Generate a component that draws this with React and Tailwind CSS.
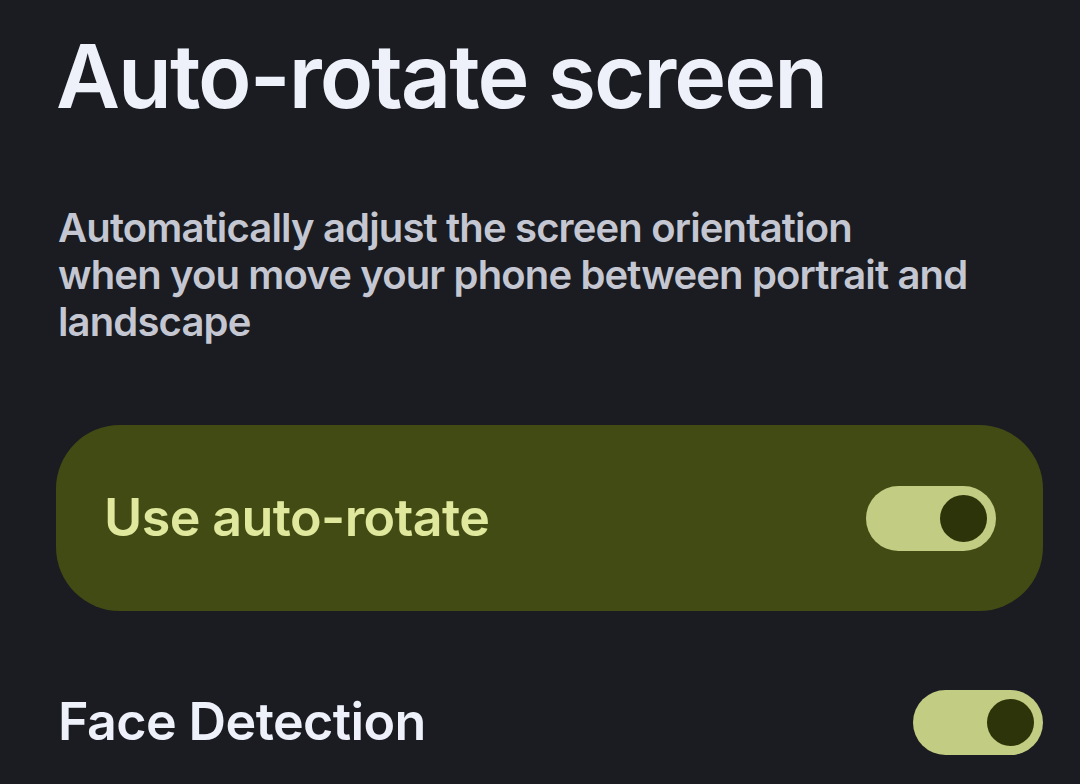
import { useState } from 'react';

function Toggle({ on, onClick }) {
  return (
    <button
      onClick={onClick}
      className="flex h-[65px] w-[130px] shrink-0 items-center rounded-full bg-[#c2cc82] px-[9px]"
    >
      <span className={`h-[47px] w-[47px] rounded-full bg-[#2d3409] ${on ? 'ml-auto' : ''}`} />
    </button>
  );
}

export default function App() {
  const [autoRotate, setAutoRotate] = useState(true);
  const [face, setFace] = useState(true);

  return (
    <div className="h-[784px] w-[1080px] overflow-hidden bg-[#1a1c21] font-['Inter',sans-serif]">
      <h1 className="pl-[56px] pt-[21px] text-[88px] font-semibold leading-[110px] tracking-[-2px] text-[#eef0fa]">
        Auto-rotate screen
      </h1>

      <p className="mt-[73px] pl-[58px] pr-[90px] text-[40px] font-semibold leading-[47px] tracking-[-0.85px] text-[#c4c7d1]">
        Automatically adjust the screen orientation
        <br />
        when you move your phone between portrait and landscape
      </p>

      <div className="ml-[56px] mr-[37px] mt-[80px] flex h-[186px] items-center justify-between rounded-[64px] bg-[#434b14] pl-[48px] pr-[47px]">
        <span className="text-[52px] font-semibold tracking-[-0.6px] text-[#dfe89c]">Use auto-rotate</span>
        <Toggle on={autoRotate} onClick={() => setAutoRotate(v => !v)} />
      </div>

      <div className="mt-[72px] flex items-center justify-between pl-[58px] pr-[37px]">
        <span className="text-[52px] font-semibold tracking-[-0.6px] text-[#eef0fa]">Face Detection</span>
        <Toggle on={face} onClick={() => setFace(v => !v)} />
      </div>
    </div>
  );
}
